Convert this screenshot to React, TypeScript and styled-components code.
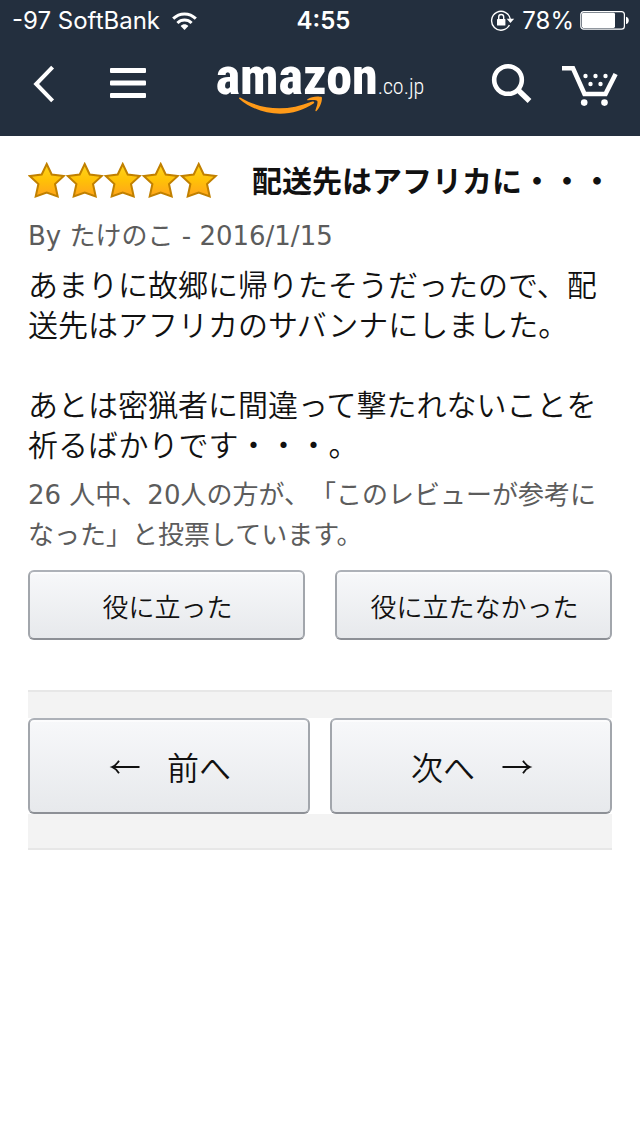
import React from 'react';
import styled, { createGlobalStyle } from 'styled-components';

const GlobalStyle = createGlobalStyle`
  * { box-sizing: border-box; }
  body {
    margin: 0;
    background: #fff;
    color: #111;
    font-family: Inter, "Noto Sans CJK JP", sans-serif;
    font-weight: 350;
    text-spacing-trim: space-all;
  }
  p, h1 { margin: 0; }
  svg { display: block; }
`;

const TopArea = styled.div`
  background: #232f3e;
  color: #fff;
`;

const StatusBar = styled.div`
  display: grid;
  grid-template-columns: 1fr auto 1fr;
  align-items: center;
  height: 42px;
  padding: 0 11px 0 12px;
  font-size: 24px;
  line-height: 40px;
  font-weight: 400;
`;

const StatusGroup = styled.div<{ $end?: boolean; $gap: number }>`
  display: flex;
  align-items: center;
  justify-content: ${(p) => (p.$end ? 'flex-end' : 'flex-start')};
  gap: ${(p) => p.$gap}px;
  white-space: nowrap;
`;

const Clock = styled.time`
  padding-left: 6px;
  font-weight: 600;
`;

const NavBar = styled.header`
  display: grid;
  grid-template-columns: 1fr auto 1fr;
  align-items: center;
  height: 94px;
  padding: 0 22px 10px 24px;
`;

const NavGroup = styled.div<{ $end?: boolean; $gap: number }>`
  display: flex;
  align-items: center;
  justify-content: ${(p) => (p.$end ? 'flex-end' : 'flex-start')};
  gap: ${(p) => p.$gap}px;
`;

const IconButton = styled.button`
  padding: 0;
  border: 0;
  background: none;
  color: inherit;
`;

const Logo = styled.a`
  position: relative;
  display: flex;
  align-items: baseline;
  height: 64px;
  padding-right: 2px;
  line-height: 50px;
  color: #fff;
  text-decoration: none;
  font-family: "Roboto Condensed", Roboto, sans-serif;
`;

const LogoName = styled.span`
  font-size: 52px;
  font-weight: 800;
`;

const LogoDomain = styled.span`
  font-size: 22px;
  font-weight: 300;
`;

const Smile = styled.svg`
  position: absolute;
  left: 22px;
  top: 43px;
`;

const Page = styled.main`
  padding: 25px 28px;
`;

const TitleRow = styled.div`
  display: flex;
  align-items: center;
  gap: 34px;
`;

const Stars = styled.div`
  display: flex;
`;

const Title = styled.h1`
  font-size: 30px;
  line-height: 40px;
  font-weight: 700;
  white-space: nowrap;
`;

const Meta = styled.p`
  margin-top: 15px;
  color: #5c5c5c;
  font-family: "DejaVu Sans", "Noto Sans CJK JP", sans-serif;
  font-size: 26px;
  line-height: 40px;
  font-weight: 400;
`;

const Body = styled.p`
  margin-top: 9px;
  font-size: 30px;
  line-height: 40px;
  white-space: pre-line;
`;

const Votes = styled(Meta)`
  margin-top: 10px;
`;

const ButtonRow = styled.div<{ $gap: number }>`
  display: grid;
  grid-template-columns: 1fr 1fr;
  gap: ${(p) => p.$gap}px;
  background: #fff;
`;

const HelpfulRow = styled(ButtonRow)`
  margin-top: 15px;
`;

const Button = styled.button<{ $large?: boolean }>`
  display: flex;
  align-items: center;
  justify-content: center;
  gap: 26px;
  height: ${(p) => (p.$large ? 96 : 70)}px;
  padding: 0 0 0 2px;
  border: 2px solid;
  border-color: #adb1b8 #a2a6ac #8d9096;
  border-radius: 6px;
  background: linear-gradient(#f7f8fa, #e7e9ec);
  box-shadow: inset 0 2px 0 rgba(255, 255, 255, 0.6);
  color: #111;
  font: inherit;
  font-size: ${(p) => (p.$large ? 32 : 26)}px;
`;

const Pagination = styled.nav`
  margin-top: 50px;
  padding: 26px 0 34px;
  border: solid #e7e7e7;
  border-width: 2px 0;
  background: #f3f3f3;
`;

const Star = () => (
  <svg width="38" height="38" viewBox="0 0 38 38" aria-hidden="true">
    <path
      d="M18.700 2 L23.700 12.500 L35.800 14 L27 22 L29.700 34.500 L18.700 30.500 L7.700 34.500 L10.400 22 L1.800 14 L13.700 12.500 Z"
      fill="url(#gold)"
      stroke="#c18000"
      strokeWidth="2"
    />
  </svg>
);

const Arrow = ({ left }: { left?: boolean }) => (
  <svg width="32" height="32" viewBox="0 0 32 32" fill="none" stroke="currentColor" strokeWidth="1.8" aria-hidden="true">
    {left ? (
      <path d="M30.500 17 H3 M10 10.800 C8 14 5.500 16 3 17 C5.500 18 8 20 10 23.200" />
    ) : (
      <path d="M1.500 17 H29 M22 10.800 C24 14 26.500 16 29 17 C26.500 18 24 20 22 23.200" />
    )}
  </svg>
);

export default function App() {
  return (
    <>
      <GlobalStyle />
      <TopArea>
        <StatusBar>
          <StatusGroup $gap={12}>
            <span>-97 SoftBank</span>
            <svg width="25" height="19" viewBox="0 0 25 19" fill="none" stroke="#fff" strokeWidth="3" aria-label="Wi-Fi">
              <path d="M1.2 6.6 C7.5 .3 17.5 .3 23.8 6.6" />
              <path d="M5.4 11 C9.4 7.1 15.6 7.1 19.6 11" />
              <path d="M8.6 14 C10.9 11.8 14.1 11.8 16.4 14 L12.5 18 Z" fill="#fff" stroke="none" />
            </svg>
          </StatusGroup>
          <Clock>4:55</Clock>
          <StatusGroup $end $gap={6}>
            <svg width="26" height="22" viewBox="0 0 26 22" fill="none" stroke="#fff" strokeWidth="1.4" aria-label="Rotation locked">
              <path d="M19.400 15 A9.400 9.400 0 1 1 20.300 9.300" />
              <path d="M16.600 8.800 H24.200 L20.400 13 Z" fill="#fff" stroke="none" />
              <rect x="7" y="9" width="8.400" height="6.600" rx=".6" fill="#fff" stroke="none" />
              <path d="M8.700 9.400 V7 A2.500 2.500 0 0 1 13.700 7 V9.400" />
            </svg>
            <span>78%</span>
            <svg width="49" height="20" viewBox="0 0 49 20" aria-label="Battery">
              <rect x=".8" y=".6" width="43.600" height="17.600" rx="3" fill="none" stroke="#fff" strokeWidth="1.200" />
              <rect x="2" y="1.800" width="33" height="15.200" rx="1.400" fill="#fff" />
              <path d="M46 5.800 C49.700 6.300 49.700 12.600 46 13.100 Z" fill="#fff" />
            </svg>
          </StatusGroup>
        </StatusBar>
        <NavBar>
          <NavGroup $gap={46}>
            <IconButton aria-label="戻る">
              <svg width="40" height="40" viewBox="0 0 40 40" fill="none" stroke="#fff" strokeWidth="4">
                <path d="M28.600 3.200 L12.200 20 L28.600 36.800" />
              </svg>
            </IconButton>
            <IconButton aria-label="メニュー">
              <svg width="36" height="40" viewBox="0 0 36 40" fill="#fff">
                <rect y="4" width="36" height="5" rx="1" />
                <rect y="16.400" width="36" height="5" rx="1" />
                <rect y="29" width="36" height="5" rx="1" />
              </svg>
            </IconButton>
          </NavGroup>
          <Logo href="#" aria-label="amazon.co.jp">
            <LogoName>amazon</LogoName>
            <LogoDomain>.co.jp</LogoDomain>
            <Smile width="86" height="24" viewBox="0 0 86 24" fill="#ff9a18" aria-hidden="true">
              <path d="M1.200 3.700 C.6 2.800 1.600 2 2.600 2.700 C25 15.500 49 16.500 73.500 6.700 C76 5.800 77 7.400 75.500 8.600 C55 23 23 22.500 1.200 3.700 Z" />
              <path d="M69.500 4.200 C73 1.400 80.500 .8 83.700 2.100 C84.800 4.800 82.300 12.500 78.500 16 C77.500 16.500 77.200 15.900 77.500 15.100 C78.900 11.500 80 7.500 79.300 6 C78 4.700 74.500 4.900 70.200 5.300 C69 5.400 68.800 4.700 69.500 4.200 Z" />
            </Smile>
          </Logo>
          <NavGroup $end $gap={28}>
            <IconButton aria-label="検索">
              <svg width="42" height="42" viewBox="0 0 42 42" fill="none" stroke="#fff">
                <circle cx="18" cy="17" r="13.800" strokeWidth="4.600" />
                <path d="M27.500 26.500 L39.500 38" strokeWidth="5.400" />
              </svg>
            </IconButton>
            <IconButton aria-label="カート">
              <svg width="58" height="44" viewBox="0 0 58 44" fill="none" stroke="#fff" strokeWidth="4.600">
                <path d="M2 6.200 H13 L24.500 32 H45.500 L55.600 12" />
                <g fill="#fff" stroke="none">
                  <circle cx="25.500" cy="14" r="2.200" />
                  <circle cx="35.500" cy="14" r="2.200" />
                  <circle cx="45.500" cy="14" r="2.200" />
                  <circle cx="30.500" cy="22" r="2.200" />
                  <circle cx="40.500" cy="22" r="2.200" />
                  <circle cx="24.200" cy="40.600" r="3.300" />
                  <circle cx="44.500" cy="40.600" r="3.300" />
                </g>
              </svg>
            </IconButton>
          </NavGroup>
        </NavBar>
      </TopArea>
      <Page>
        <article>
          <svg width="0" height="0" aria-hidden="true">
            <defs>
              <linearGradient id="gold" x1="0" y1="0" x2="0" y2="1">
                <stop offset="0" stopColor="#ffd51c" />
                <stop offset=".5" stopColor="#ffc107" />
                <stop offset="1" stopColor="#ffa41c" />
              </linearGradient>
            </defs>
          </svg>
          <TitleRow>
            <Stars role="img" aria-label="5つ星">
              {[0, 1, 2, 3, 4].map((n) => (
                <Star key={n} />
              ))}
            </Stars>
            <Title>配送先はアフリカに・・・</Title>
          </TitleRow>
          <Meta>By たけのこ - 2016/1/15</Meta>
          <Body>
            {'あまりに故郷に帰りたそうだったので、配送先はアフリカのサバンナにしました。\n\nあとは密猟者に間違って撃たれないことを祈るばかりです・・・。'}
          </Body>
          <Votes>26 人中、20人の方が、「このレビューが参考になった」と投票しています。</Votes>
          <HelpfulRow $gap={30}>
            <Button type="button">役に立った</Button>
            <Button type="button">役に立たなかった</Button>
          </HelpfulRow>
        </article>
        <Pagination>
          <ButtonRow $gap={20}>
            <Button type="button" $large>
              <Arrow left />
              <span>前へ</span>
            </Button>
            <Button type="button" $large>
              <span>次へ</span>
              <Arrow />
            </Button>
          </ButtonRow>
        </Pagination>
      </Page>
    </>
  );
}
